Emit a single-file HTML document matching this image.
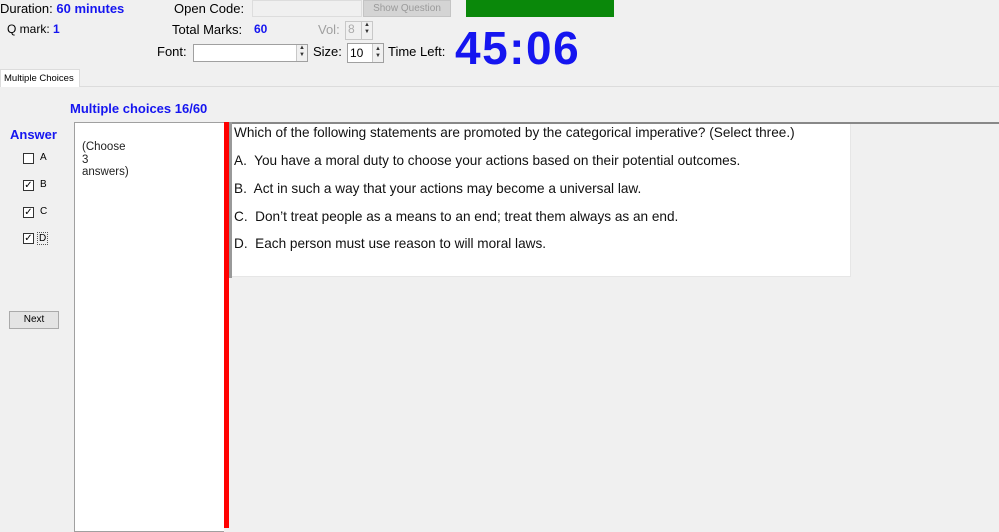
<!DOCTYPE html>
<html><head><meta charset="utf-8"><style>
*{box-sizing:border-box;margin:0;padding:0}
body{width:999px;height:528px;background:#f0f0f0;font-family:"Liberation Sans",sans-serif;font-size:12px;color:#000;position:relative;overflow:hidden}
.a{position:absolute;white-space:nowrap}
.b{color:#1515f0;font-weight:bold}
.spin{position:absolute;border:1px solid #a0a0a0;background:#fff}
.arr{position:absolute;right:0;top:0;width:11px;height:100%;border-left:1px solid #c8c8c8;background:#f0f0f0;font-size:6px;line-height:7px;text-align:center;color:#333}
.cb{position:absolute;width:11px;height:11px;border:1px solid #333;background:#fff}
.opt{font-size:13.6px;color:#111}
</style></head><body>
<div class="a" style="left:0;top:1px;font-size:13px">Duration: <span class="b">60 minutes</span></div>
<div class="a" style="left:7px;top:22px">Q mark: <span class="b">1</span></div>
<div class="a" style="left:174px;top:1px;font-size:13px">Open Code:</div>
<div class="a" style="left:252px;top:0;width:110px;height:17px;background:#f0f0f0;border:1px solid #ddd"></div>
<div class="a" style="left:363px;top:0;width:88px;height:17px;background:#d4d4d4;border:1px solid #c4c4c4;color:#9a9a9a;font-size:10px;text-align:center;line-height:15px">Show Question</div>
<div class="a" style="left:466px;top:0;width:148px;height:17px;background:#0a880a"></div>
<div class="a" style="left:172px;top:22px;font-size:13px">Total Marks:</div>
<div class="a b" style="left:254px;top:22px">60</div>
<div class="a" style="left:318px;top:22px;color:#a0a0a0;font-size:13px">Vol:</div>
<div class="spin" style="left:345px;top:21px;width:28px;height:19px;border-color:#c8c8c8;background:#f0f0f0"><span style="color:#aaa;margin-left:2px;font-size:12px">8</span><div class="arr">▲<br>▼</div></div>
<div class="a" style="left:157px;top:44px;font-size:13px">Font:</div>
<div class="spin" style="left:193px;top:44px;width:115px;height:18px"><div class="arr">▲<br>▼</div></div>
<div class="a" style="left:313px;top:44px;font-size:13px">Size:</div>
<div class="spin" style="left:347px;top:43px;width:37px;height:20px"><span style="margin-left:2px;font-size:12px;line-height:18px">10</span><div class="arr" style="padding-top:2px">▲<br>▼</div></div>
<div class="a" style="left:388px;top:44px;font-size:13px">Time Left:</div>
<div class="a" style="left:455px;top:21px;font-size:46px;font-weight:bold;color:#1515f0;letter-spacing:1.5px">45:06</div>
<div class="a" style="left:0;top:86px;width:999px;height:1px;background:#dcdcdc"></div>
<div class="a" style="left:0;top:69px;width:80px;height:18px;background:#fff;border:1px solid #dcdcdc;border-bottom:none;font-size:9.5px;padding:3px 0 0 3px">Multiple Choices</div>
<div class="a" style="left:70px;top:101px;color:#1515f0;font-weight:bold;font-size:13px">Multiple choices 16/60</div>
<div class="a" style="left:10px;top:127px;color:#1515f0;font-weight:bold;font-size:13px">Answer</div>
<div class="cb" style="left:23px;top:153px"></div><div class="a" style="left:40px;top:152px;font-size:10px">A</div>
<div class="cb" style="left:23px;top:180px;font-size:10px;line-height:9px;text-align:center">✓</div><div class="a" style="left:40px;top:179px;font-size:10px">B</div>
<div class="cb" style="left:23px;top:207px;font-size:10px;line-height:9px;text-align:center">✓</div><div class="a" style="left:40px;top:206px;font-size:10px">C</div>
<div class="cb" style="left:23px;top:233px;font-size:10px;line-height:9px;text-align:center">✓</div><div class="a" style="left:37px;top:232px;font-size:10px;border:1px dotted #555;padding:0 1px">D</div>
<div class="a" style="left:9px;top:311px;width:50px;height:18px;background:#e4e4e4;border:1px solid #aaa;font-size:10px;text-align:center;line-height:16px">Next</div>
<div class="a" style="left:74px;top:122px;width:150px;height:410px;background:#fff;border:1px solid #a0a0a0;border-right:none"></div>
<div class="a" style="left:82px;top:141px;font-size:11.5px;line-height:12.5px;color:#222">(Choose<br>3<br>answers)</div>
<div class="a" style="left:224px;top:122px;width:5px;height:406px;background:#f00"></div>
<div class="a" style="left:229px;top:122px;width:770px;height:2px;background:#888"></div>
<div class="a" style="left:229px;top:122px;width:3px;height:156px;background:#999"></div>
<div class="a" style="left:232px;top:124px;width:619px;height:153px;background:#fff;border-right:1px solid #e6e6e6;border-bottom:1px solid #e6e6e6"></div>
<div class="a opt" style="left:234px;top:125px">Which of the following statements are promoted by the categorical imperative? (Select three.)</div>
<div class="a opt" style="left:234px;top:153px">A.&nbsp; You have a moral duty to choose your actions based on their potential outcomes.</div>
<div class="a opt" style="left:234px;top:181px">B.&nbsp; Act in such a way that your actions may become a universal law.</div>
<div class="a opt" style="left:234px;top:209px">C.&nbsp; Don’t treat people as a means to an end; treat them always as an end.</div>
<div class="a opt" style="left:234px;top:236px">D.&nbsp; Each person must use reason to will moral laws.</div>
</body></html>
